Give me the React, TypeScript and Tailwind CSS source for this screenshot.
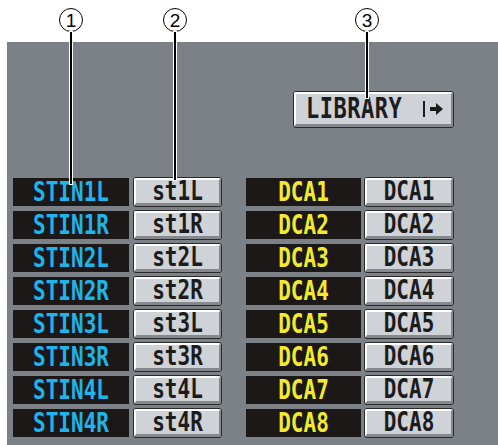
import React from 'react';

const mono = { fontFamily: '"DejaVu Sans Mono", "Liberation Mono", monospace' };

const stin = ['STIN1L', 'STIN1R', 'STIN2L', 'STIN2R', 'STIN3L', 'STIN3R', 'STIN4L', 'STIN4R'];
const st = ['st1L', 'st1R', 'st2L', 'st2R', 'st3L', 'st3R', 'st4L', 'st4R'];
const dca = ['DCA1', 'DCA2', 'DCA3', 'DCA4', 'DCA5', 'DCA6', 'DCA7', 'DCA8'];

function Label({ text, color, width }: { text: string; color: string; width: string }) {
  return (
    <div className={`${width} h-[28px] bg-[#1c1818] flex items-center justify-center`}>
      <span className={`inline-block scale-y-[1.25] font-bold text-[21px] leading-none ${color}`} style={mono}>
        {text}
      </span>
    </div>
  );
}

function Btn({ text, width }: { text: string; width: string }) {
  return (
    <div className={`${width} h-[30px] rounded-[3px] border border-[#2a2a2a] bg-[#2a2a2a]`}>
      <div className="h-full rounded-[2px] border-t-2 border-l-2 border-b-[3px] border-r-2 border-t-white border-l-white border-b-[#85898d] border-r-[#85898d] bg-[#cfd2d6] flex items-center justify-center">
        <span className="inline-block scale-y-[1.25] font-bold text-[21px] leading-none text-[#1c1c1c]" style={mono}>
          {text}
        </span>
      </div>
    </div>
  );
}

function Callout({ n, x, bottom }: { n: number; x: number; bottom: number }) {
  return (
    <div className="absolute top-[8px] w-[24px] flex flex-col items-center" style={{ left: x - 12 }}>
      <div className="shrink-0 w-[24px] h-[24px] rounded-full border border-black bg-white flex items-center justify-center text-[19px] leading-none text-black" style={{ fontFamily: '"Liberation Sans", Arial, sans-serif' }}>
        {n}
      </div>
      <div className="shrink-0 w-[2px] bg-black shadow-[0_0_0_1px_white]" style={{ height: bottom - 32 }} />
    </div>
  );
}

export default function App() {
  return (
    <div className="relative w-[498px] h-[445px] bg-white pt-[42px] pl-[7px] overflow-hidden">
      <div className="h-full bg-[#7b8186] flex flex-col">
        <div className="flex justify-end pr-[44px] pt-[49px]">
          <div className="w-[161px] h-[37px] rounded-[3px] border border-[#2a2a2a] bg-[#2a2a2a]">
            <div className="h-full rounded-[2px] border-t-2 border-l-2 border-b-[3px] border-r-2 border-t-white border-l-white border-b-[#85898d] border-r-[#85898d] bg-[#cfd2d6] flex items-center pl-[10px]">
              <span className="inline-block scale-y-[1.3] font-bold text-[22px] leading-none text-[#1c1c1c] tracking-[0.5px]" style={mono}>
                LIBRARY
              </span>
              <div className="ml-[21px] w-[2px] h-[16px] bg-[#1c1c1c]" />
              <svg width="14" height="12" viewBox="0 0 14 12" className="ml-[5px]">
                <path d="M0 4h6V0l7 6-7 6V8H0z" fill="#1c1c1c" />
              </svg>
            </div>
          </div>
        </div>
        <div className="flex mt-[49px] pl-[6px] gap-[24px]">
          <div className="flex flex-col gap-[3px]">
            {stin.map((s, i) => (
              <div key={s} className="flex items-center gap-[4px]">
                <Label text={s} color="text-[#1fb4ea]" width="w-[116px]" />
                <Btn text={st[i]} width="w-[89px]" />
              </div>
            ))}
          </div>
          <div className="flex flex-col gap-[3px]">
            {dca.map((d) => (
              <div key={d} className="flex items-center gap-[3px]">
                <Label text={d} color="text-[#f2ea2c]" width="w-[115px]" />
                <Btn text={d} width="w-[90px]" />
              </div>
            ))}
          </div>
        </div>
      </div>
      <Callout n={1} x={71} bottom={184} />
      <Callout n={2} x={175} bottom={180} />
      <Callout n={3} x={367} bottom={98} />
    </div>
  );
}
